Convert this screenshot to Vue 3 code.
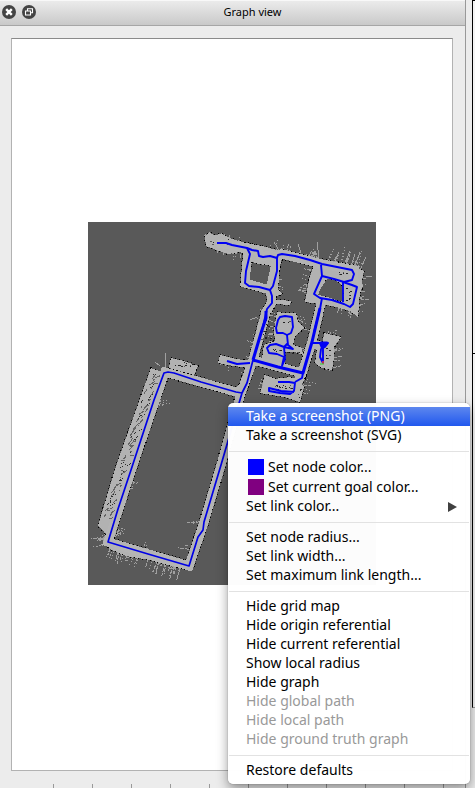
<script setup>
const groups = [
  [{ label: 'Take a screenshot (PNG)', active: true }, { label: 'Take a screenshot (SVG)' }],
  [
    { label: 'Set node color...', swatch: 'node' },
    { label: 'Set current goal color...', swatch: 'goal' },
    { label: 'Set link color...', submenu: true }
  ],
  [{ label: 'Set node radius...' }, { label: 'Set link width...' }, { label: 'Set maximum link length...' }],
  [
    { label: 'Hide grid map' },
    { label: 'Hide origin referential' },
    { label: 'Hide current referential' },
    { label: 'Show local radius' },
    { label: 'Hide graph' },
    { label: 'Hide global path', disabled: true },
    { label: 'Hide local path', disabled: true },
    { label: 'Hide ground truth graph', disabled: true }
  ],
  [{ label: 'Restore defaults' }]
]

// Free space seen by the laser, as filled areas
const areas = [
  'M205 237L209 232L214 235L222 234L232 239L246 243L262 246L262 252L246 255L240 252L228 254L214 249L206 246Z',
  'M246 245L262 246L281 251L278 290L283 294L276 296L267 293L241 286Z',
  'M310 258L316 261L355 268L364 271L360 290L358 317L350 311L336 307L322 304L305 302L309 280L313 268Z',
  'M272 299L280 300L291 301L290 305L276 304Z',
  'M277 312L284 313L296 313L298 322L304 328L295 336L293 345L302 348L303 355L294 352L285 352L285 367L262 358L264 345L275 341L274 330Z',
  'M324 333L341 337L334 347L334 357L332 370L322 368L315 363L317 350L312 347L313 340L323 342Z',
  'M220 355L236 359L253 361L251 368L234 366L218 363Z',
  'M264 375L276 379L290 377L304 386L300 402L284 397L260 393L263 385Z',
  'M151 368L159 371L167 371L110 538L104 532L98 526L116 466Z',
  'M171 358L184 361L198 366L194 375L169 368Z',
  'M107 540L190 566L184 569L168 565L150 560L138 558L126 556L110 549Z'
]

const holes = [
  'M252 262L258 264L272 266L269 285L262 286L248 281Z',
  'M327 279L334 280L341 284L343 291L344 302L336 300L328 297L318 295L321 288Z'
]

const corridors = [
  'M217 243L247 248L258 251L261 257L270 255L277 258L282 254L322 264L354 270L353 279L358 286L350 308',
  'M248 250L245 283L270 290L277 259',
  'M270 290L272 302L266 312L253 360L241 393L221 465L204 522L199 537L189 566L108 542L133 465L165 372L236 392L243 388',
  'M322 299L312 342L302 373L253 360',
  'M302 373L298 382L278 382'
]

const links = [
  'M217 243L226 243L232 245L247 248L252 250L258 251L259 256L263 257L270 256L277 258L278 255L282 254L295 256L310 260L322 264L352 270L354 274L352 280L344 282L334 279L322 276L321 265',
  'M247 248L250 254L246 271L245 283L249 286L259 287L270 290L273 286L277 271L277 258',
  'M270 290L272 296L272 303L267 309L262 331',
  'M322 276L318 285L314 294L320 298L332 300L344 304L350 307L353 304L357 287L352 285L343 282L343 302',
  'M322 298L320 309L314 332',
  'M280 317L285 316L292 317L293 327L291 333L287 335L283 333L277 333L276 328L278 320Z',
  'M287 335L288 345L293 349L284 347L276 344L270 345L267 348L269 353L277 354L284 357L282 366L285 359L284 347L288 343',
  'M227 361L237 364L250 363',
  'M278 382L289 382L295 383L294 391L290 394L280 393L269 391L269 388L281 391L294 392M295 382L302 378L303 373',
  'M312 343L328 343L325 347L321 349L320 357L323 363L323 348L320 344'
]
const trunks = [
  'M266 311L266 318L261 333L253 360',
  'M320 308L312 342L303 373L278 367L253 360',
  'M321 343L327 343L322 347Z'
]
const tours = [
  'M253 360L247 383L242 393L236 392L201 382L174 373L168 372L164 373L154 400L131 470L118 509L108 542L148 554L189 566L198 537L203 530L204 522L221 465L242 393'
]

let seed = 71
const rand = () => {
  seed = (seed * 16807) % 2147483647
  return seed / 2147483647
}

// Stray sensor returns leaving a wall: [x1, y1, x2, y2, dx, dy, length, count]
const walls = [
  [206, 235, 216, 248, -1, -0.1, 5, 10],
  [214, 236, 242, 242, 0.1, -1, 6, 6],
  [216, 250, 242, 254, -0.1, 1, 8, 8],
  [262, 247, 316, 260, 0.3, -1, 13, 16],
  [316, 261, 362, 270, 0.35, -1, 18, 17],
  [364, 271, 358, 316, 1, -0.1, 8, 8],
  [335, 304, 357, 313, -0.3, 1, 8, 8],
  [312, 265, 304, 300, -1, -0.25, 10, 10],
  [280, 262, 276, 291, 1, 0.2, 7, 9],
  [264, 310, 245, 374, -1, -0.3, 7, 8],
  [270, 305, 268, 345, 1, 0.2, 8, 16],
  [296, 315, 304, 331, 1, 0.2, 12, 6],
  [295, 345, 309, 355, 1, -0.3, 7, 5],
  [333, 338, 333, 368, 1, -0.2, 10, 10],
  [324, 334, 336, 337, 0.2, -1, 8, 5],
  [319, 362, 331, 370, 0.2, 1, 6, 4],
  [304, 376, 302, 398, 1, 0.1, 12, 5],
  [219, 357, 248, 367, -0.4, 1, 9, 6],
  [265, 379, 261, 391, -1, -0.1, 6, 5],
  [171, 359, 196, 367, 0.2, -1, 3, 8],
  [158, 398, 156, 406, 1, 0.1, 14, 7],
  [128, 480, 125, 488, 1, 0.1, 15, 6],
  [114, 530, 112, 538, 1, -0.6, 13, 8],
  [108, 532, 106, 548, -1, 0.2, 15, 12],
  [110, 548, 140, 558, -0.3, 1, 13, 20],
  [148, 558, 188, 570, -0.35, 1, 14, 22],
  [144, 551, 149, 552, -0.2, -1, 9, 5],
  [198, 518, 200, 522, -1, 0.05, 14, 3],
  [188, 546, 189, 550, -1, -0.1, 11, 2]
]

const rays = walls.flatMap(([x1, y1, x2, y2, dx, dy, length, count]) =>
  Array.from({ length: count }, () => {
    const t = rand()
    const l = length * (0.3 + rand() * 0.7)
    const skew = (rand() - 0.5) * 0.4
    const x = x1 + (x2 - x1) * t
    const y = y1 + (y2 - y1) * t
    return { x, y, ex: x + (dx + skew) * l, ey: y + (dy + skew) * l, dotted: rand() > 0.45 }
  })
)

// Single rays long enough to stand out
const beams = [
  'M165 353V369', 'M155 362L160 366', 'M274 242L280 252', 'M298 244L301 253', 'M317 242L319 258',
  'M339 252L334 264', 'M348 256L346 266', 'M355 254L351 266', 'M360 252L355 266', 'M366 277L372 276', 'M250 320L257 317'
]

// Unknown gaps and obstacles: [x, y, spanX, spanY, slant, count]
const clutter = [
  [281, 320, 8, 2, 0, 3],
  [272, 348, 10, 3, 0, 9],
  [266, 337, 9, 5, 0, 10],
  [287, 352, 12, 1, 2, 6],
  [274, 384, 17, 5, 0, 18],
  [337, 272, 9, 3, 2, 8],
  [345, 286, 5, 15, 0, 8],
  [325, 347, 5, 15, -1, 6],
  [173, 361, 18, 6, 3, 12],
  [297, 388, 4, 9, 0, 4],
  [208, 236, 22, 9, 2, 6],
  [264, 318, 6, 26, -4, 16]
]
const specks = clutter.flatMap(([x, y, w, h, slant, count]) =>
  Array.from({ length: count }, () => {
    const v = rand()
    return { x: Math.round(x + w * rand() + slant * v), y: Math.round(y + h * v), w: rand() > 0.6 ? 2 : 1, dark: rand() > 0.3 }
  })
)

const gaps = Array.from({ length: 78 }, (_, i) => {
  const t = (i + rand()) / 78
  const x = 150 - 48 * t + rand() * 8
  const y = 374 + 146 * t
  const l = 1 + rand() * 4
  return { x, y, ex: x + l, ey: y - l * rand() * 1.6, dotted: rand() > 0.7 }
})
</script>

<template>
  <main class="window">
    <section class="dock">
      <header class="titlebar">
        <button class="round" type="button" aria-label="Close">
          <svg viewBox="0 0 14 14" aria-hidden="true">
            <circle cx="7" cy="7" r="7" fill="#444" />
            <path d="M4.2 4.2L9.8 9.8M9.8 4.2L4.2 9.8" stroke="#fff" stroke-width="2.4" />
          </svg>
        </button>
        <button class="round" type="button" aria-label="Float">
          <svg viewBox="0 0 14 14" aria-hidden="true">
            <circle cx="7" cy="7" r="7" fill="#444" />
            <path d="M5.5 6V3.8H10.5V7.8H8.5M3.5 6H8.5V10H3.5Z" fill="none" stroke="#fff" stroke-width="1.1" />
          </svg>
        </button>
        <h1 class="title">Graph view</h1>
      </header>

      <div class="content">
        <div class="canvas">
          <svg class="map" viewBox="88 222 288 363" role="img" aria-label="Occupancy grid with graph">
            <rect x="88" y="222" width="288" height="363" fill="#595959" />
            <g shape-rendering="crispEdges" fill="none">
              <g stroke="#000" stroke-width="2" stroke-dasharray="1 3">
                <path v-for="d in areas" :key="d" :d="d" />
              </g>
              <path v-for="d in corridors" :key="d" :d="d" stroke="#000" stroke-width="11" stroke-dasharray="1 3" />
              <line
                v-for="(r, i) in rays" :key="i" :x1="r.x" :y1="r.y" :x2="r.ex" :y2="r.ey"
                stroke="#a0a0a0" :stroke-dasharray="r.dotted ? '1 2' : '4 1'"
              />
              <path v-for="d in beams" :key="d" :d="d" stroke="#a0a0a0" />
              <path v-for="d in areas" :key="d" :d="d" fill="#b2b2b2" />
              <path v-for="d in holes" :key="d" :d="d" fill="#595959" stroke="#000" stroke-dasharray="1 3" />
              <path v-for="d in corridors" :key="d" :d="d" stroke="#b4b4b4" stroke-width="9" />
              <path :d="holes[1]" fill="#595959" />
              <line
                v-for="(g, i) in gaps" :key="i" :x1="g.x" :y1="g.y" :x2="g.ex" :y2="g.ey"
                :stroke="g.dotted ? '#2c2c2c' : '#646464'" :stroke-dasharray="g.dotted ? '1 1' : 'none'"
              />
              <rect
                v-for="(s, i) in specks" :key="i" :x="s.x" :y="s.y" :width="s.w" height="1"
                :fill="s.dark ? '#222' : '#595959'"
              />
            </g>
            <g fill="none" stroke-linejoin="round">
              <path v-for="d in tours" :key="d" :d="d" stroke="#0000e6" stroke-width="1.7" />
              <path v-for="d in links" :key="d" :d="d" stroke="#0000f4" stroke-width="1.9" />
              <path v-for="d in trunks" :key="d" :d="d" stroke="#0000f4" stroke-width="3" />
            </g>
            <path d="M323 361V364" stroke="#f03030" stroke-width="1.5" />
            <path d="M320 364H324" stroke="#30d030" />
          </svg>
        </div>
      </div>

      <div class="ruler" aria-hidden="true"></div>

      <div class="menu" role="menu" aria-label="Graph view options">
        <div v-for="(group, i) in groups" :key="i" class="group" role="group">
          <button
            v-for="item in group" :key="item.label" type="button" role="menuitem" class="item"
            :class="{ active: item.active, tall: item.swatch }" :disabled="item.disabled"
          >
            <span v-if="item.swatch" class="swatch" :class="item.swatch"></span>
            <span class="label">{{ item.label }}</span>
            <svg v-if="item.submenu" class="arrow" viewBox="0 0 9 10" aria-hidden="true">
              <path d="M0 0L9 5L0 10Z" fill="#404040" />
            </svg>
          </button>
        </div>
      </div>
    </section>

    <aside class="neighbour" aria-hidden="true">
      <div class="view"></div>
    </aside>
  </main>
</template>

<style>
body {
  margin: 0;
  background: #ececec;
}
</style>

<style scoped>
.window {
  display: flex;
  min-height: 100vh;
  overflow: hidden;
  font-family: "Noto Sans", "Open Sans", sans-serif;
  color: #000;
}

.dock {
  position: relative;
  display: flex;
  flex: 1;
  flex-direction: column;
  border-right: 1px solid #999;
}

.titlebar {
  display: flex;
  align-items: center;
  gap: 6px;
  box-sizing: border-box;
  height: 26px;
  padding: 0 0 2px 2px;
  border-top: 1px solid #f8f8f8;
  border-bottom: 1px solid #a6a6a6;
  background: linear-gradient(#ebebeb, #c9c9c9);
}

.round {
  width: 14px;
  height: 14px;
  padding: 0;
  border: 0;
  background: none;
}

.round svg {
  display: block;
}

.title {
  flex: 1;
  margin: 0;
  padding-right: 2px;
  font-size: 11px;
  font-weight: 400;
  line-height: 16px;
  text-align: center;
}

.content {
  display: flex;
  flex: 1;
  padding: 12px 12px 13px 11px;
}

.canvas {
  display: flex;
  flex: 1;
  align-items: center;
  justify-content: center;
  padding-bottom: 2px;
  border: 1px solid #b2b2b2;
  border-top-color: #8a8a8a;
  background: #fff;
}

.map {
  display: block;
  width: 288px;
  max-width: 100%;
}

.ruler {
  height: 4px;
  margin-left: 53px;
  background: repeating-linear-gradient(90deg, #999 0 1px, transparent 1px 39px);
}

.menu {
  position: absolute;
  top: 403px;
  left: 228px;
  box-sizing: border-box;
  width: 242px;
  padding: 4px 0;
  border-radius: 5px;
  background: rgba(255, 255, 255, 0.98);
  box-shadow: 0 0 1px rgba(0, 0, 0, 0.6), 0 5px 12px rgba(0, 0, 0, 0.4);
  z-index: 1;
}

.group + .group::before {
  content: "";
  display: block;
  height: 1px;
  margin: 6px 1px 5px;
  background: #e2e2e2;
}

.item {
  display: flex;
  align-items: center;
  width: 100%;
  height: 19px;
  padding: 0 13px 0 18px;
  border: 0;
  background: none;
  color: #000;
  font-family: inherit;
  font-size: 14px;
  line-height: 17px;
  text-align: left;
  white-space: nowrap;
}

.item.tall {
  height: 20px;
}

.item.active {
  background: linear-gradient(#5d87ee, #2158ee);
  color: #fff;
}

.item:disabled {
  color: #999;
}

.label {
  padding-bottom: 2px;
}

.swatch {
  width: 16px;
  height: 16px;
  margin: 0 4px 0 2px;
}

.swatch.node {
  background: #00f;
}

.swatch.goal {
  background: #800080;
}

.arrow {
  width: 9px;
  height: 10px;
  margin-left: auto;
}

.neighbour {
  display: flex;
  flex-direction: column;
  width: 9px;
  padding-left: 6px;
  box-sizing: border-box;
}

.view {
  height: 706px;
  border-top: 1px solid #000;
  border-bottom: 1px solid #999;
  border-left: 1px solid #000;
  background: linear-gradient(#000, #000) 0 352px / 100% 1px no-repeat #f4f4f4;
}
</style>
